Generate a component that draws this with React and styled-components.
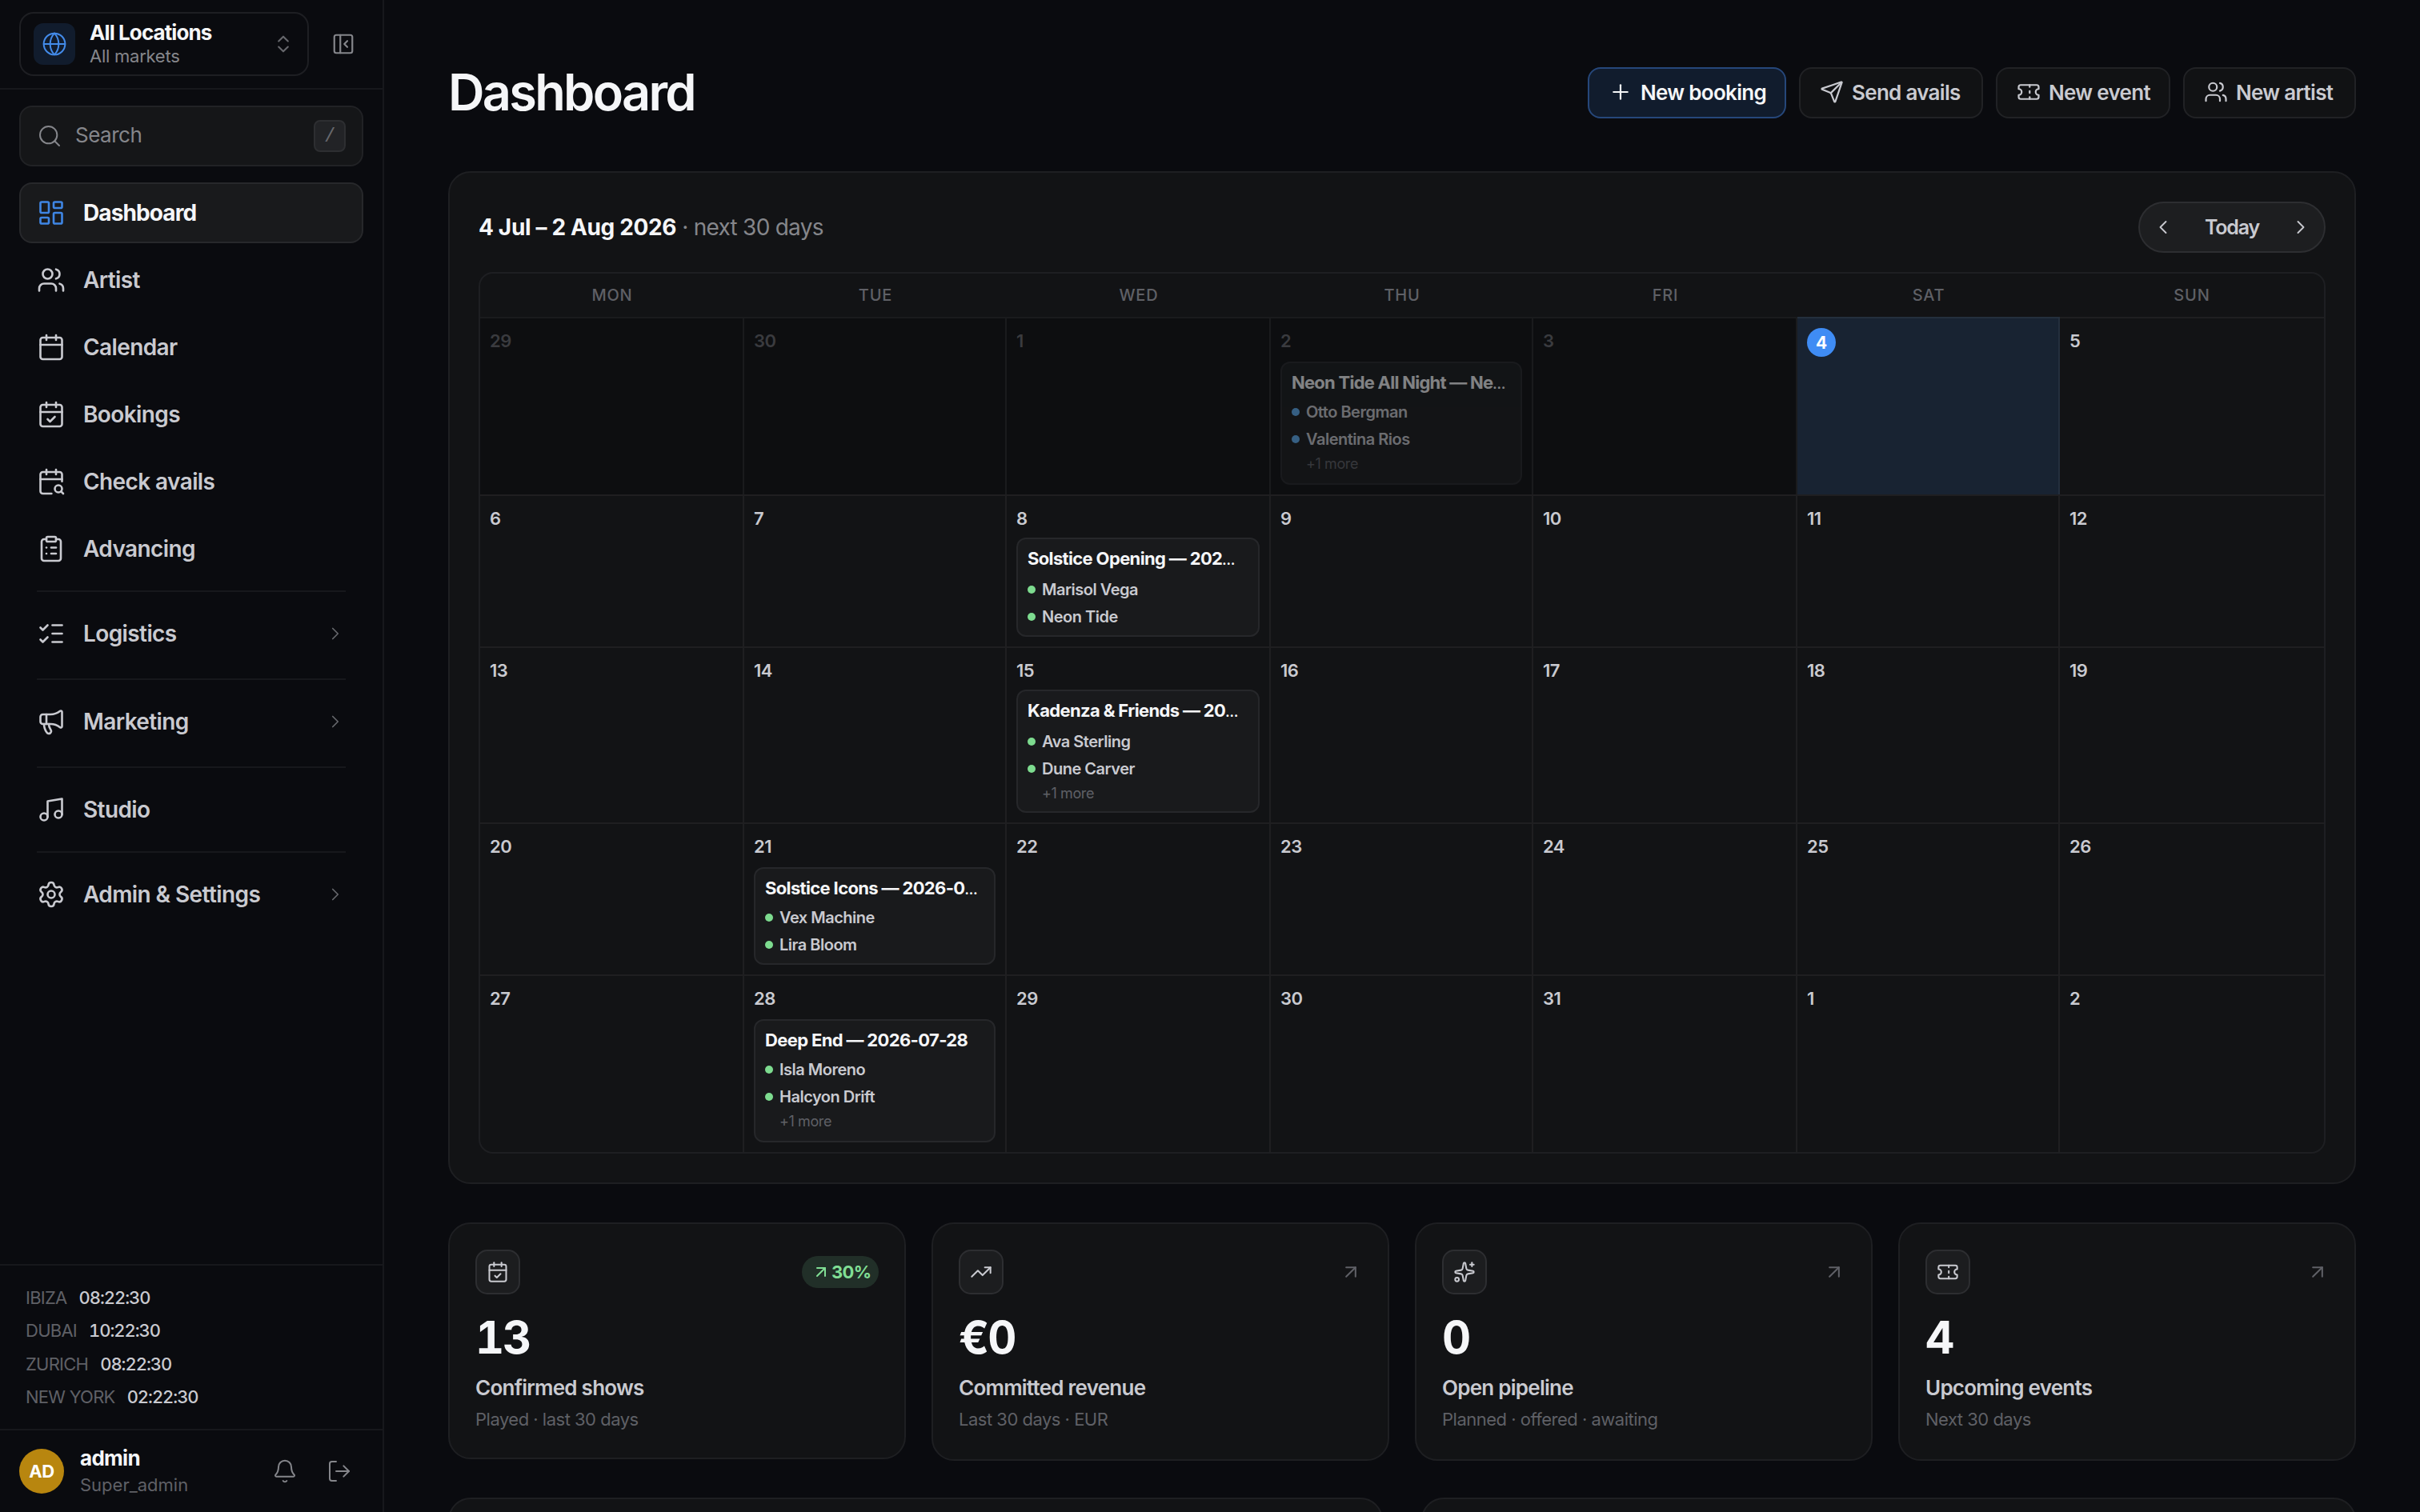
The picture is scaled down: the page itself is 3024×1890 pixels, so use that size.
import React from "react";
import styled, { createGlobalStyle } from "styled-components";
import {
  ArrowUpRight,
  Bell,
  Calendar,
  CalendarCheck,
  CalendarSearch,
  ChevronLeft,
  ChevronRight,
  ChevronsUpDown,
  ClipboardList,
  Globe,
  LayoutDashboard,
  ListChecks,
  LogOut,
  Megaphone,
  Music,
  PanelLeftClose,
  Plus,
  Search,
  Send,
  Settings,
  Sparkles,
  Ticket,
  TrendingUp,
  Users,
} from "lucide-react";

const line = "#1e1f22";

const GlobalStyle = createGlobalStyle`
  * {
    box-sizing: border-box;
  }
  body {
    margin: 0;
    background: #0a0b0f;
    color: #f5f6f8;
    font-family: Inter, "Liberation Sans", sans-serif;
    overflow: hidden;
    -webkit-font-smoothing: antialiased;
  }
  svg {
    flex-shrink: 0;
  }
`;

const Base = styled.div`
  display: flex;
  width: 3024px;
  height: 1890px;
  overflow: hidden;
`;

const Sidebar = styled.aside`
  display: flex;
  flex-direction: column;
  flex-shrink: 0;
  width: 480px;
  border-right: 2px solid #17181c;
`;

const SidebarTop = styled.div`
  display: flex;
  align-items: center;
  height: 112px;
  padding: 0 34px 0 24px;
  border-bottom: 2px solid #17181c;
  color: #85868b;
`;

const LocationButton = styled.div`
  display: flex;
  align-items: center;
  width: 362px;
  height: 80px;
  margin-right: 28px;
  padding: 0 16px;
  border: 2px solid #1e1f23;
  border-radius: 18px;
  color: #67686d;
`;

const GlobeTile = styled.div`
  display: flex;
  align-items: center;
  justify-content: center;
  width: 52px;
  height: 52px;
  margin-right: 18px;
  border-radius: 12px;
  background: #111c2d;
  color: #438bea;
`;

const LocationText = styled.div`
  flex: 1;
`;

const LocationName = styled.div`
  font-size: 26px;
  line-height: 32px;
  font-weight: 670;
  letter-spacing: -0.9px;
  color: #f5f6f8;
`;

const LocationSub = styled.div`
  margin-bottom: 2px;
  font-size: 22px;
  line-height: 26px;
  letter-spacing: -0.25px;
  color: #85868b;
`;

const SearchBox = styled.div`
  display: flex;
  align-items: center;
  height: 76px;
  margin: 20px 24px;
  padding: 0 20px;
  border: 2px solid #212225;
  border-radius: 16px;
  background: #151618;
  color: #85868b;
  font-size: 26px;
  letter-spacing: -0.5px;
`;

const SearchLabel = styled.span`
  flex: 1;
  margin: 0 0 3px 16px;
`;

const Key = styled.kbd`
  display: flex;
  align-items: center;
  justify-content: center;
  width: 40px;
  height: 40px;
  border: 2px solid #2d2e31;
  border-radius: 8px;
  background: #222326;
  color: #67686d;
  font-family: "Liberation Mono", monospace;
  font-size: 24px;
`;

const Nav = styled.nav`
  display: flex;
  flex-direction: column;
  gap: 8px;
  padding: 0 24px;
`;

const NavItem = styled.div`
  display: flex;
  align-items: center;
  height: 76px;
  padding: 0 20px;
  border: 2px solid ${(p) => (p.$active ? "#27282b" : "transparent")};
  border-radius: 16px;
  background: ${(p) => (p.$active ? "#191a1c" : "transparent")};
  color: ${(p) => (p.$active ? "#f5f6f8" : "#c9cad0")};
  font-size: 28px;
  font-weight: ${(p) => (p.$active ? 670 : 590)};
  letter-spacing: ${(p) => (p.$active ? -0.9 : -0.6)}px;

  > svg:first-child {
    color: ${(p) => (p.$active ? "#3f86e4" : "#c9cad0")};
  }
  > svg:last-child:not(:first-child) {
    color: #67686d;
  }
`;

const NavLabel = styled.span`
  flex: 1;
  margin-left: 22px;
`;

const NavDivider = styled.hr`
  width: 386px;
  height: 2px;
  margin: ${(p) => (p.$wide ? 10 : 6)}px 0 6px 22px;
  border: 0;
  background: #17181c;
`;

const Clocks = styled.div`
  margin-top: auto;
  height: 206px;
  padding: 22px 32px 0;
  border-top: 2px solid #17181c;
`;

const ClockRow = styled.div`
  display: flex;
  gap: 15px;
  height: 41.3px;
  line-height: 36px;
  font-size: 22px;
  letter-spacing: -0.75px;
  color: #5f6066;
`;

const ClockTime = styled.span`
  color: #c9cad0;
  font-variant-numeric: tabular-nums;
  font-weight: 470;
  letter-spacing: -1.05px;
`;

const UserBar = styled.div`
  display: flex;
  align-items: center;
  height: 104px;
  padding: 0 38px 0 24px;
  border-top: 2px solid #17181c;
  color: #85868b;
`;

const Avatar = styled.div`
  display: flex;
  align-items: center;
  justify-content: center;
  width: 56px;
  height: 56px;
  margin-right: 20px;
  border-radius: 50%;
  background: #b8860f;
  color: #fff;
  font-size: 22px;
  font-weight: 700;
  letter-spacing: -0.3px;
`;

const UserText = styled.div`
  flex: 1;
`;

const UserName = styled.div`
  font-size: 26px;
  line-height: 34px;
  font-weight: 670;
  letter-spacing: -0.7px;
  color: #f5f6f8;
`;

const UserRole = styled.div`
  font-size: 22px;
  line-height: 32px;
  color: #5f6066;
`;

const UserActions = styled.div`
  display: flex;
  gap: 36px;
`;

const Main = styled.main`
  flex: 1;
  padding: 84px 80px 0;
`;

const Header = styled.header`
  display: flex;
  align-items: center;
  justify-content: space-between;
  height: 64px;
  margin-bottom: 66px;
`;

const Title = styled.h1`
  margin: 0 0 3px;
  font-size: 63px;
  line-height: 64px;
  font-weight: 570;
  letter-spacing: -2.7px;
`;

const Actions = styled.div`
  display: flex;
  gap: 16px;
`;

const ActionButton = styled.div`
  display: flex;
  align-items: center;
  gap: 10px;
  width: ${(p) => p.$width}px;
  height: 64px;
  padding: 0 0 2px 24px;
  border: 2px solid ${(p) => (p.$primary ? "#26477a" : "#212225")};
  border-radius: 16px;
  background: ${(p) => (p.$primary ? "#111c2d" : "#111214")};
  color: ${(p) => (p.$primary ? "#f5f6f8" : "#c9cad0")};
  font-size: 26px;
  font-weight: 590;
  letter-spacing: -0.7px;
  white-space: nowrap;
`;

const Panel = styled.section`
  border: 2px solid ${line};
  border-radius: 28px;
  background: #121315;
`;

const CalendarPanel = styled(Panel)`
  height: 1266px;
  padding: 36px;
`;

const CalendarHead = styled.div`
  display: flex;
  align-items: center;
  justify-content: space-between;
  height: 64px;
  margin-bottom: 24px;
`;

const Range = styled.div`
  font-size: 28px;
  letter-spacing: -0.75px;
  color: #85868b;

  strong {
    font-weight: 670;
    letter-spacing: -0.35px;
    color: #f5f6f8;
  }
`;

const TodayNav = styled.div`
  display: flex;
  align-items: center;
  justify-content: space-between;
  width: 234px;
  height: 64px;
  padding: 0 15px;
  border: 2px solid #2d2e31;
  border-radius: 32px;
  background: #1d1e20;
  color: #c9cad0;
  font-size: 25px;
  font-weight: 590;
  letter-spacing: -1.2px;
`;

const Grid = styled.div`
  border: 2px solid ${line};
  border-radius: 18px;
  overflow: hidden;
`;

const columns = "330px 328px 330px 328px 330px 328px 330px";

const Weekdays = styled.div`
  display: grid;
  grid-template-columns: ${columns};
  height: 54px;
  line-height: 54px;
  text-align: center;
  color: #5f6066;
  font-size: 20px;
  font-weight: 500;
  letter-spacing: 0.8px;
`;

const Days = styled.div`
  display: grid;
  grid-template-columns: ${columns};
  grid-template-rows: 222px 190px 220px 190px 222px;
`;

const Day = styled.div`
  min-width: 0;
  padding: ${(p) => (p.$first ? 12 : 10)}px 12px 0;
  border-top: 2px solid rgba(255, 255, 255, 0.055);
  border-right: 2px solid rgba(255, 255, 255, 0.055);
  background: ${(p) => (p.$today ? "#182332" : p.$past ? "#0d0e10" : "transparent")};

  &:nth-child(7n) {
    border-right: 0;
  }
`;

const DayNumber = styled.div`
  height: 36px;
  margin-bottom: ${(p) => (p.$late ? 8 : 6)}px;
  line-height: ${(p) => (p.$first ? 32 : 36)}px;
  font-size: 22px;
  font-weight: 590;
  letter-spacing: -0.5px;
  color: ${(p) => (p.$past ? "#3a3b3f" : "#c9cad0")};
`;

const TodayBadge = styled.div`
  width: 36px;
  height: 36px;
  border-radius: 50%;
  background: #3f8cf4;
  color: #fff;
  font-size: 21px;
  font-weight: 700;
  line-height: 37px;
  text-align: center;
`;

const EventTitle = styled.div`
  height: 39px;
  line-height: 31px;
  font-size: 22px;
  font-weight: 660;
  letter-spacing: -0.65px;
  white-space: nowrap;
  color: #f5f6f8;

  span {
    letter-spacing: -1px;
    font-size: 16px;
  }
`;

const ArtistRow = styled.div`
  display: flex;
  align-items: center;
  gap: 8px;
  height: 30px;
  margin-bottom: ${(p) => (p.$last ? 0 : 4)}px;
  font-size: 20px;
  font-weight: 580;
  letter-spacing: -0.5px;
  color: #c9cad0;

  &::before {
    content: "";
    width: 10px;
    height: 10px;
    border-radius: 50%;
    background: ${(p) => (p.$past ? "#5fb0f5" : "#7ddb8f")};
  }
`;

const More = styled.div`
  height: 30px;
  padding-left: 18px;
  line-height: 31px;
  font-size: 18px;
  letter-spacing: -0.4px;
  color: #5f6066;
`;

const EventCard = styled.div`
  padding: 9px 12px 8px;
  border: 2px solid #26272a;
  border-radius: 12px;
  background: #191a1c;
  opacity: ${(p) => (p.$past ? 0.5 : 1)};

  ${EventTitle} {
    height: ${(p) => (p.$compact ? 37 : 39)}px;
    letter-spacing: ${(p) => (p.$past ? -0.75 : -0.65)}px;
  }
  ${More} {
    height: ${(p) => (p.$compact ? 32 : 30)}px;
  }
`;

const Stats = styled.div`
  display: grid;
  grid-template-columns: repeat(4, 572px);
  gap: 32px;
  align-items: start;
  margin-top: 48px;
`;

const StatCard = styled(Panel)`
  height: ${(p) => (p.$badge ? 296 : 298)}px;
  padding: 32px;
`;

const StatTop = styled.div`
  display: flex;
  align-items: center;
  justify-content: space-between;
  color: #5f6066;
`;

const IconTile = styled.div`
  display: flex;
  align-items: center;
  justify-content: center;
  width: 56px;
  height: 56px;
  border: 2px solid #2d2e31;
  border-radius: 15px;
  background: #1c1d1f;
  color: #c9cad0;
`;

const Trend = styled.div`
  display: flex;
  align-items: center;
  gap: 1px;
  width: 96px;
  height: 40px;
  padding-left: 12px;
  border-radius: 20px;
  background: #212f28;
  color: #80de94;
  font-size: 22px;
  font-weight: 650;
  letter-spacing: -0.7px;
`;

const StatValue = styled.div`
  margin-top: 24px;
  height: 60px;
  line-height: 60px;
  font-size: 56px;
  font-weight: 680;
  letter-spacing: -2.2px;
  font-variant-numeric: tabular-nums;
`;

const StatLabel = styled.div`
  margin-top: 13px;
  height: 39px;
  line-height: 39px;
  font-size: 26px;
  font-weight: 590;
  letter-spacing: -0.75px;
  color: #c9cad0;
`;

const StatSub = styled.div`
  margin-top: 1px;
  height: 39px;
  line-height: 39px;
  font-size: 22px;
  letter-spacing: -0.5px;
  color: #5f6066;
`;

const Lower = styled.div`
  display: grid;
  grid-template-columns: 1fr 1fr;
  gap: 48px;
  margin-top: 46px;
`;

const LowerPanel = styled(Panel)`
  height: 400px;
`;

const mainNav = [
  { label: "Dashboard", icon: LayoutDashboard, active: true },
  { label: "Artist", icon: Users },
  { label: "Calendar", icon: Calendar },
  { label: "Bookings", icon: CalendarCheck },
  { label: "Check avails", icon: CalendarSearch },
  { label: "Advancing", icon: ClipboardList },
];

const groups = [
  { label: "Logistics", icon: ListChecks, more: true },
  { label: "Marketing", icon: Megaphone, more: true },
  { label: "Studio", icon: Music },
  { label: "Admin & Settings", icon: Settings, more: true },
];

const clocks = [
  ["IBIZA", "08:22:30"],
  ["DUBAI", "10:22:30"],
  ["ZURICH", "08:22:30"],
  ["NEW YORK", "02:22:30"],
];

const actions = [
  { label: "New booking", icon: Plus, width: 248, primary: true },
  { label: "Send avails", icon: Send, width: 230 },
  { label: "New event", icon: Ticket, width: 218 },
  { label: "New artist", icon: Users, width: 216 },
];

const weekdays = ["MON", "TUE", "WED", "THU", "FRI", "SAT", "SUN"];

const days = [
  29, 30, 1, 2, 3, 4, 5, 6, 7, 8, 9, 10, 11, 12, 13, 14, 15, 16, 17, 18, 19, 20,
  21, 22, 23, 24, 25, 26, 27, 28, 29, 30, 31, 1, 2,
];

const TODAY = 5;

// keyed by position in the 5-week grid
const events = {
  3: { title: "Neon Tide All Night — Ne", cut: true, artists: ["Otto Bergman", "Valentina Rios"], more: 1 },
  9: { title: "Solstice Opening — 202", cut: true, artists: ["Marisol Vega", "Neon Tide"] },
  16: { title: "Kadenza & Friends — 20", cut: true, artists: ["Ava Sterling", "Dune Carver"], more: 1 },
  22: { title: "Solstice Icons — 2026-0", cut: true, artists: ["Vex Machine", "Lira Bloom"] },
  29: { title: "Deep End — 2026-07-28", artists: ["Isla Moreno", "Halcyon Drift"], more: 1 },
};

const stats = [
  { value: "13", label: "Confirmed shows", sub: "Played · last 30 days", icon: CalendarCheck, trend: "30%" },
  { value: "€0", label: "Committed revenue", sub: "Last 30 days · EUR", icon: TrendingUp },
  { value: "0", label: "Open pipeline", sub: "Planned · offered · awaiting", icon: Sparkles },
  { value: "4", label: "Upcoming events", sub: "Next 30 days", icon: Ticket },
];

function NavLink({ label, icon: Icon, active, more }) {
  return (
    <NavItem $active={active}>
      <Icon size={36} strokeWidth={1.75} />
      <NavLabel>{label}</NavLabel>
      {more && <ChevronRight size={26} strokeWidth={1.6} />}
    </NavItem>
  );
}

function SideMenu() {
  return (
    <Sidebar>
      <SidebarTop>
        <LocationButton>
          <GlobeTile>
            <Globe size={32} strokeWidth={1.5} />
          </GlobeTile>
          <LocationText>
            <LocationName>All Locations</LocationName>
            <LocationSub>All markets</LocationSub>
          </LocationText>
          <ChevronsUpDown size={28} strokeWidth={1.75} />
        </LocationButton>
        <PanelLeftClose size={30} strokeWidth={1.75} />
      </SidebarTop>
      <SearchBox>
        <Search size={32} strokeWidth={1.5} />
        <SearchLabel>Search</SearchLabel>
        <Key>/</Key>
      </SearchBox>
      <Nav>
        {mainNav.map((item) => (
          <NavLink key={item.label} {...item} />
        ))}
        {groups.map((item, i) => (
          <React.Fragment key={item.label}>
            <NavDivider $wide={i > 0 && groups[i - 1].more} />
            <NavLink {...item} />
          </React.Fragment>
        ))}
      </Nav>
      <Clocks>
        {clocks.map(([city, time]) => (
          <ClockRow key={city}>
            <span>{city}</span>
            <ClockTime>{time}</ClockTime>
          </ClockRow>
        ))}
      </Clocks>
      <UserBar>
        <Avatar>AD</Avatar>
        <UserText>
          <UserName>admin</UserName>
          <UserRole>Super_admin</UserRole>
        </UserText>
        <UserActions>
          <Bell size={32} strokeWidth={1.5} />
          <LogOut size={32} strokeWidth={1.5} />
        </UserActions>
      </UserBar>
    </Sidebar>
  );
}

function DayCell({ day, index }) {
  const past = index < TODAY;
  const first = index < 7;
  const late = index >= 21;
  const event = events[index];

  return (
    <Day $past={past} $today={index === TODAY} $first={first}>
      {index === TODAY ? (
        <TodayBadge>{day}</TodayBadge>
      ) : (
        <DayNumber $past={past} $first={first} $late={late}>
          {day}
        </DayNumber>
      )}
      {event && (
        <EventCard $past={past} $compact={first || late}>
          <EventTitle>
            {event.title}
            {event.cut && <span>…</span>}
          </EventTitle>
          {event.artists.map((name, i) => (
            <ArtistRow key={name} $past={past} $last={i === event.artists.length - 1}>
              {name}
            </ArtistRow>
          ))}
          {event.more && <More>+{event.more} more</More>}
        </EventCard>
      )}
    </Day>
  );
}

function MonthCalendar() {
  return (
    <CalendarPanel>
      <CalendarHead>
        <Range>
          <strong>4 Jul – 2 Aug 2026</strong> · next 30 days
        </Range>
        <TodayNav>
          <ChevronLeft size={28} strokeWidth={1.6} />
          Today
          <ChevronRight size={28} strokeWidth={1.6} />
        </TodayNav>
      </CalendarHead>
      <Grid>
        <Weekdays>
          {weekdays.map((name) => (
            <span key={name}>{name}</span>
          ))}
        </Weekdays>
        <Days>
          {days.map((day, i) => (
            <DayCell key={i} day={day} index={i} />
          ))}
        </Days>
      </Grid>
    </CalendarPanel>
  );
}

function Stat({ value, label, sub, icon: Icon, trend }) {
  return (
    <StatCard $badge={Boolean(trend)}>
      <StatTop>
        <IconTile>
          <Icon size={28} strokeWidth={1.75} />
        </IconTile>
        {trend ? (
          <Trend>
            <ArrowUpRight size={24} strokeWidth={2} />
            {trend}
          </Trend>
        ) : (
          <ArrowUpRight size={28} strokeWidth={1.75} />
        )}
      </StatTop>
      <StatValue>{value}</StatValue>
      <StatLabel>{label}</StatLabel>
      <StatSub>{sub}</StatSub>
    </StatCard>
  );
}

function App() {
  return (
    <Base>
      <GlobalStyle />
      <SideMenu />
      <Main>
        <Header>
          <Title>Dashboard</Title>
          <Actions>
            {actions.map(({ label, icon: Icon, width, primary }) => (
              <ActionButton key={label} $width={width} $primary={primary}>
                <Icon size={30} strokeWidth={1.75} />
                {label}
              </ActionButton>
            ))}
          </Actions>
        </Header>
        <MonthCalendar />
        <Stats>
          {stats.map((item) => (
            <Stat key={item.label} {...item} />
          ))}
        </Stats>
        <Lower>
          <LowerPanel />
          <LowerPanel />
        </Lower>
      </Main>
    </Base>
  );
}

export default App;
